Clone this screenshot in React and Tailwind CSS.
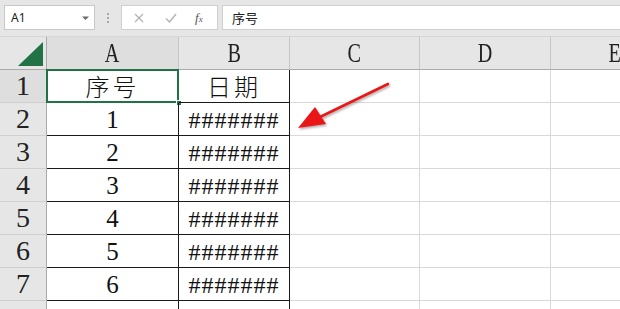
import React from "react";

const serif = { fontFamily: '"Liberation Serif","Times New Roman","Noto Sans CJK SC",serif' };

const cols = ["A", "B", "C", "D", "E"];
const data = [
  ["序号", "日期"],
  ["1", "#######"],
  ["2", "#######"],
  ["3", "#######"],
  ["4", "#######"],
  ["5", "#######"],
  ["6", "#######"],
  ["", ""],
];

export default function App() {
  return (
    <div className="relative w-[620px] h-[309px] overflow-hidden bg-white select-none">
      {/* top bar */}
      <div className="h-[37px] bg-[#e6e6e6] flex items-start pt-[5px] border-b border-[#d6d6d6]">
        <div className="ml-[4px] w-[91px] h-[25px] bg-white border border-[#c8c8c8] flex items-center justify-between pl-[6px] pr-[4px]">
          <span className="text-[12px] text-[#222]" style={{ fontFamily: '"Noto Sans","Liberation Sans",sans-serif' }}>A1</span>
          <svg width="9" height="6" viewBox="0 0 9 6"><path d="M1 1.5h7L4.5 5z" fill="#6b6b6b" /></svg>
        </div>
        <div className="w-[26px] h-[25px] flex flex-col items-center justify-center gap-[2px]">
          <span className="w-[2px] h-[2px] bg-[#a8a8a8]" />
          <span className="w-[2px] h-[2px] bg-[#a8a8a8]" />
          <span className="w-[2px] h-[2px] bg-[#a8a8a8]" />
        </div>
        <div className="w-[97px] h-[25px] bg-white border border-[#d0d0d0] flex items-center">
          <svg className="ml-[12px]" width="10" height="10" viewBox="0 0 10 10"><path d="M1 1l8 8M9 1l-8 8" stroke="#b4b4b4" strokeWidth="1.3" /></svg>
          <svg className="ml-[21px]" width="12" height="10" viewBox="0 0 12 10"><path d="M1 5.5l3.5 3.5L11 1" stroke="#b4b4b4" strokeWidth="1.5" fill="none" /></svg>
          <span className="ml-[18px] text-[13px] italic text-[#555] leading-none" style={serif}>
            f<span className="text-[9px]">x</span>
          </span>
        </div>
        <div className="ml-[4px] flex-1 h-[25px] bg-white border-y border-l border-[#d0d0d0] flex items-center pl-[9px]">
          <span className="text-[13px] text-[#222]" style={{ fontFamily: '"Noto Sans CJK SC",sans-serif' }}>序号</span>
        </div>
      </div>

      {/* grid */}
      <div className="grid w-[680px] grid-cols-[47px_132px_111px_130px_131px_129px] grid-rows-[33px_repeat(8,33px)]" style={serif}>
        {/* corner */}
        <div className="bg-[#e6e6e6] border-r border-b border-[#ababab] relative">
          <svg className="absolute right-[3px] bottom-[3px]" width="25" height="24" viewBox="0 0 25 24"><path d="M25 0V24H0z" fill="#217346" /></svg>
        </div>
        {cols.map((c, i) => (
          <div
            key={c}
            className={`border-r border-[#c6c6c6] border-b ${i === 0 ? "border-b-[#217346] bg-[#dedede]" : "border-b-[#ababab] bg-[#e6e6e6]"} flex items-end justify-center pb-[1px]`}
          >
            <span className="text-[28px] leading-[30px] text-[#222] inline-block scale-x-[0.72] origin-center">{c}</span>
          </div>
        ))}
        {data.map((row, r) => (
          <React.Fragment key={r}>
            <div className={`border-r ${r === 0 ? "border-r-[#217346] bg-[#dedede]" : "border-r-[#ababab] bg-[#e6e6e6]"} border-b border-b-[#cfcfcf] flex items-end justify-center pb-[1px]`}>
              {r < 7 && <span className="text-[28px] leading-[30px] text-[#222]">{r + 1}</span>}
            </div>
            {row.map((v, ci) => {
              const inTable = r < 7;
              return (
                <div
                  key={ci}
                  className={`relative flex items-end justify-center pb-[2px] border-r border-b ${inTable ? "border-[#1a1a1a]" : "border-[#d9d9d9] border-r-[#1a1a1a]"}`}
                >
                  {v.startsWith("#") ? (
                    <span className="text-[24px] leading-[26px] tracking-[1px] text-[#111]">{v}</span>
                  ) : (
                    <span
                      className={`${r === 0 ? "text-[24px] leading-[28px] font-light" : "text-[25px] leading-[26px]"} text-[#111]`}
                      style={r === 0 ? { fontFamily: '"Noto Sans CJK SC",serif', letterSpacing: "3px" } : undefined}
                    >
                      {v}
                    </span>
                  )}
                  {r === 0 && ci === 0 && (
                    <>
                      <div className="absolute -left-[1px] -top-[1px] right-[-1px] bottom-[-1px] border-2 border-[#217346]" />
                      <div className="absolute right-[-4px] bottom-[-4px] w-[6px] h-[6px] bg-[#217346] border border-white" />
                    </>
                  )}
                </div>
              );
            })}
            <div className="border-r border-b border-[#d9d9d9]" />
            <div className="border-r border-b border-[#d9d9d9]" />
            <div className="border-b border-[#d9d9d9]" />
          </React.Fragment>
        ))}
      </div>

      {/* red arrow overlay */}
      <svg className="absolute left-0 top-0 pointer-events-none" width="620" height="309">
        <defs>
          <filter id="sh" x="-20%" y="-20%" width="140%" height="140%">
            <feDropShadow dx="1" dy="1.5" stdDeviation="1.2" floodColor="#000" floodOpacity="0.35" />
          </filter>
        </defs>
        <g filter="url(#sh)">
          <path d="M388 84 L320 117" stroke="#e81919" strokeWidth="2.6" strokeLinecap="round" />
          <path d="M298 128 L315 107 L326 124 Z" fill="#e81919" />
        </g>
      </svg>
    </div>
  );
}
